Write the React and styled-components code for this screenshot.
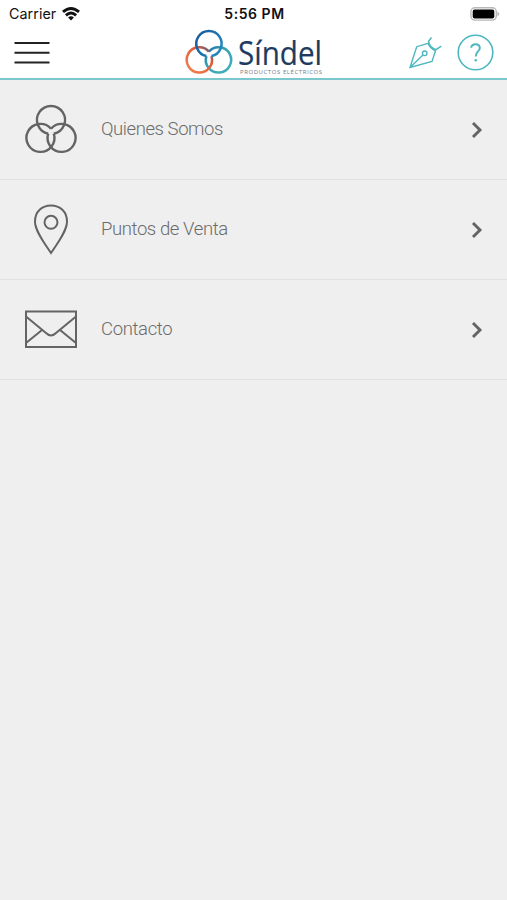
import React from "react";
import styled, { createGlobalStyle } from "styled-components";

const teal = "#4eb7c0";

const GlobalStyle = createGlobalStyle`
  *, *::before, *::after { box-sizing: border-box; }
  body { margin: 0; background: #efefef; }
`;

const Screen = styled.main`
  width: 100%;
  min-height: 900px;
  background: #efefef;
  font-family: "Open Sans", "Noto Sans", sans-serif;
`;

const Header = styled.header`
  height: 80px;
  background: #fff;
  border-bottom: 2px solid #7cc6cd;
`;

const StatusBar = styled.div`
  display: grid;
  grid-template-columns: 1fr auto 1fr;
  align-items: center;
  height: 27px;
  padding: 0 7px 0 9px;
  font-family: Inter, sans-serif;
  color: #111;
`;

const Carrier = styled.div`
  display: flex;
  align-items: center;
  gap: 6px;
  font-size: 14.3px;
  letter-spacing: 0.05px;
`;

const Time = styled.div`
  font-size: 14px;
  font-weight: 600;
  letter-spacing: 0.55px;
`;

const BatterySlot = styled.div`
  display: flex;
  justify-content: flex-end;
`;

const Toolbar = styled.nav`
  display: grid;
  grid-template-columns: 1fr auto 1fr;
  height: 51px;
  padding: 0 13px 0 14px;
`;

const IconButton = styled.button`
  display: block;
  padding: 0;
  border: 0;
  background: none;
  color: ${(p) => p.$color};
`;

const Actions = styled.div`
  display: flex;
  justify-content: flex-end;
  align-items: center;
  gap: 15px;
`;

const Glyph = styled.svg`
  display: block;
  flex: none;
  overflow: visible;
  fill: none;
  stroke: currentColor;
  stroke-width: ${(p) => p.$line || 2};
`;

const BrandName = styled.text`
  font-family: "Open Sans", sans-serif;
  font-size: 33px;
  fill: #203b60;
  stroke: #203b60;
  stroke-width: 0.2px;
`;

const BrandTagline = styled.text`
  font-family: "Open Sans", sans-serif;
  font-size: 6px;
  fill: #6f7b8b;
  stroke: none;
`;

const Menu = styled.ul`
  margin: 0;
  padding: 0;
  list-style: none;
`;

const Row = styled.li`
  display: grid;
  grid-template-columns: 52px 1fr 12px;
  column-gap: 24px;
  align-items: center;
  height: 100px;
  padding: 0 24px 0 25px;
  border-bottom: 1px solid #e1e1e1;
  color: #646464;
`;

const Label = styled.span`
  padding-bottom: 1px;
  font-family: Roboto, sans-serif;
  font-size: 18.5px;
  font-weight: 300;
  line-height: 24px;
  letter-spacing: ${(p) => p.$tracking}px;
  color: #6c6c6c;
`;

function Rings({ colors = ["currentColor", "currentColor", "currentColor"] }) {
  return (
    <>
      <path stroke={colors[2]} d="M26 24.7A14 14 0 1 1 23.2 29.7" />
      <path stroke={colors[1]} d="M26 24.7A14 14 0 1 0 28.8 29.7" />
      <path stroke={colors[0]} d="M23.2 29.7A14 14 0 1 1 28.8 29.7" />
    </>
  );
}

function Logo() {
  return (
    <Glyph width="138" height="51" viewBox="185 27 138 51" $line={2.8}>
      <defs>
        <linearGradient id="blue" x1="0" y1="0" x2="1" y2="0.6">
          <stop offset="0" stopColor="#165b9c" />
          <stop offset="0.55" stopColor="#1b6dae" />
          <stop offset="1" stopColor="#2387bd" />
        </linearGradient>
        <linearGradient id="orange" x1="0" y1="1" x2="1" y2="0">
          <stop offset="0" stopColor="#f28450" />
          <stop offset="0.7" stopColor="#df5b37" />
          <stop offset="1" stopColor="#28659c" />
        </linearGradient>
        <linearGradient id="teal" x1="1" y1="1" x2="0" y2="0">
          <stop offset="0" stopColor="#43b3b9" />
          <stop offset="0.65" stopColor="#36a0b1" />
          <stop offset="1" stopColor="#1c6da8" />
        </linearGradient>
      </defs>
      <g transform="translate(185.4 29.2) scale(.905)">
        <Rings colors={["url(#blue)", "url(#orange)", "url(#teal)"]} />
      </g>
      <BrandName x="238" y="65" textLength="84" lengthAdjust="spacingAndGlyphs">Síndel</BrandName>
      <BrandTagline x="240" y="73.8" textLength="82">PRODUCTOS ELÉCTRICOS</BrandTagline>
    </Glyph>
  );
}

const icons = {
  rings: <g strokeWidth="2.4"><Rings /></g>,
  pin: (
    <>
      <path d="M26 49C20 40 10 27 10 17.4C10 7.5 17 1.5 26 1.5S42 7.5 42 17.4C42 27 32 40 26 49Z" />
      <circle cx="26" cy="18.3" r="6.5" />
    </>
  ),
  mail: (
    <>
      <path d="M1 7.5H51V43H1Z" />
      <path d="M1 12.5L21 29Q26 34 31 29L51 12.5M1 39L17 26M51 39L35 26" />
    </>
  ),
};

const items = [
  { icon: "rings", label: "Quienes Somos", tracking: -0.43 },
  { icon: "pin", label: "Puntos de Venta", tracking: -0.4 },
  { icon: "mail", label: "Contacto", tracking: -0.35 },
];

export default function App() {
  return (
    <Screen>
      <GlobalStyle />
      <Header>
        <StatusBar>
          <Carrier>
            Carrier
            <Glyph width="18" height="14" viewBox="0 0 18 14" $line={3}>
              <path d="M1 4.9Q9-2 17 4.9M3.9 8.3Q9 3.8 14.1 8.3" />
              <path d="M6.1 10.4Q9 8 11.9 10.4L9 13.5Z" fill="currentColor" stroke="none" />
            </Glyph>
          </Carrier>
          <Time>5:56 PM</Time>
          <BatterySlot>
            <Glyph width="30" height="14" viewBox="0 0 30 14" $line={1.4}>
              <rect x=".9" y=".7" width="25.4" height="12.4" rx="4" stroke="#b8b8b8" />
              <rect x="2.7" y="2.6" width="21.6" height="8.8" rx="1.8" fill="#000" stroke="none" />
              <path d="M27.5 4.6Q31 7 27.5 9.4Z" fill="#b0b0b0" stroke="none" />
            </Glyph>
          </BatterySlot>
        </StatusBar>
        <Toolbar>
          <IconButton $color="#222" aria-label="Menú">
            <Glyph width="36" height="51" viewBox="0 0 36 51">
              <path d="M.5 16H35.5M.5 25.8H35.5M.5 35.5H35.5" />
            </Glyph>
          </IconButton>
          <Logo />
          <Actions>
            <IconButton $color={teal} aria-label="Editar">
              <Glyph width="33" height="33" viewBox="409 36 33 33" $line={1.4}>
                <path d="M410 67.5L416.7 46.7L428 43.3Q430 48.5 435.5 50.8L432 61.5ZM410 67.5L423 55" />
                <path d="M431.5 37.5L428.5 41.5Q430 48 436 49.7L441.3 46.2" />
                <circle cx="424.7" cy="53.3" r="2.3" />
              </Glyph>
            </IconButton>
            <IconButton $color={teal} aria-label="Ayuda">
              <Glyph width="37" height="37" viewBox="0 0 37 37" $line={1.6}>
                <circle cx="18.5" cy="18.5" r="17.3" />
                <path d="M14.2 13.8Q14.4 10.2 18.6 10.2Q22.8 10.2 22.8 14Q22.8 16.1 20.7 17.8Q18.8 19.4 18.8 22.5" strokeWidth="2" />
                <circle cx="18.8" cy="26.3" r="1.3" fill="currentColor" stroke="none" />
              </Glyph>
            </IconButton>
          </Actions>
        </Toolbar>
      </Header>
      <Menu>
        {items.map(({ icon, label, tracking }) => (
          <Row key={label}>
            <Glyph width="52" height="52" viewBox="0 0 52 52">{icons[icon]}</Glyph>
            <Label $tracking={tracking}>{label}</Label>
            <Glyph width="12" height="18" viewBox="0 0 12 18" $line={2.9}>
              <path d="M2 2L9 9L2 16" />
            </Glyph>
          </Row>
        ))}
      </Menu>
    </Screen>
  );
}
